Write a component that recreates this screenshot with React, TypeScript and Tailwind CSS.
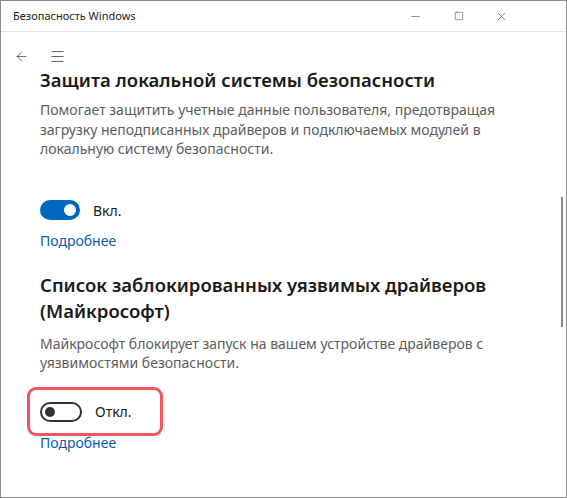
import { ArrowLeft, Menu, Minus, Square, X } from "lucide-react";

function Toggle({ on }: { on: boolean }) {
  return on ? (
    <div className="flex h-5 w-10 items-center justify-end rounded-full bg-[#0067c0] px-[4px]">
      <div className="h-3 w-3 rounded-full bg-white" />
    </div>
  ) : (
    <div className="flex h-5 w-[42px] items-center rounded-full border-2 border-[#333] px-[3px]">
      <div className="h-[10px] w-[10px] rounded-full bg-[#333]" />
    </div>
  );
}

export default function App() {
  return (
    <div
      className="relative flex h-[498px] w-[567px] flex-col overflow-hidden border border-[#8a8a8a] bg-white text-[#1a1a1a]"
      style={{ fontFamily: '"Noto Sans", "Open Sans", sans-serif' }}
    >
      {/* title bar */}
      <div className="flex h-[31px] shrink-0 items-center border-b border-[#e6e6e6] pl-3 pr-[43px]">
        <span className="flex-1 text-[11px] text-[#222]">Безопасность Windows</span>
        <div className="flex h-full items-center text-[#333]">
          <div className="flex w-[43px] justify-center">
            <Minus size={13} strokeWidth={1} />
          </div>
          <div className="flex w-[43px] justify-center">
            <Square size={10} strokeWidth={1.2} />
          </div>
          <div className="flex w-[43px] justify-center">
            <X size={13} strokeWidth={1} />
          </div>
        </div>
      </div>

      {/* nav */}
      <div className="flex h-[46px] shrink-0 items-center gap-[20px] pl-[13px] pt-[2px] text-[#444]">
        <ArrowLeft size={15} strokeWidth={1.2} />
        <Menu size={17} strokeWidth={1.2} />
      </div>

      <div className="flex-1 pl-[39px] pr-6">
        <h2 className="-mt-[11px] text-[18.5px] font-semibold leading-[26px]">
          Защита локальной системы безопасности
        </h2>
        <p className="mt-[7px] text-[14px] leading-[19.5px] text-[#5d5d5d]">
          Помогает защитить учетные данные пользователя, предотвращая загрузку неподписанных
          драйверов и подключаемых модулей в локальную систему безопасности.
        </p>

        <div className="mt-[41px] flex items-center gap-[13px]">
          <Toggle on />
          <span className="text-[14px]">Вкл.</span>
        </div>
        <a className="mt-[10px] block text-[14px] leading-[20px] text-[#0b5cad]">Подробнее</a>

        <h2 className="mt-[21px] text-[18.5px] font-semibold leading-[26px]">
          Список заблокированных уязвимых драйверов (Майкрософт)
        </h2>
        <p className="mt-[10px] text-[14px] leading-[19.5px] text-[#5d5d5d]">
          Майкрософт блокирует запуск на вашем устройстве драйверов с уязвимостями безопасности.
        </p>

        <div className="relative mt-[29px] flex h-5 items-center gap-[13px]">
          <Toggle on={false} />
          <span className="text-[14px]">Откл.</span>
          <div className="absolute -left-[13px] -top-[15px] h-[49px] w-[136px] rounded-[9px] border-[3px] border-[#f2575f]" />
        </div>
        <a className="mt-[11px] block text-[14px] leading-[20px] text-[#0b5cad]">Подробнее</a>
      </div>

      {/* scrollbar */}
      <div className="absolute right-[3px] top-[196px] h-[130px] w-[2px] bg-[#8a8a8a]" />
    </div>
  );
}
